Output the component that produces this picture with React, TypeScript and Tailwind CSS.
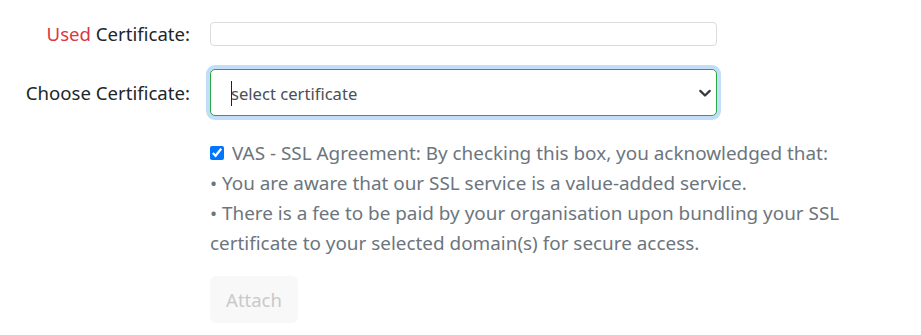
import React from "react";

export default function App() {
  return (
    <div className="w-[921px] h-[335px] bg-white font-['Noto_Sans','Open_Sans',sans-serif] text-[18.6px] text-[#212529]">
      <div className="flex flex-col pt-[22px]">
        <div className="flex items-center h-[24px]">
          <div className="w-[190px] text-right whitespace-nowrap">
            <span className="text-[#dc3545]">Used</span> Certificate:
          </div>
          <div className="ml-[20px] w-[507px] h-[24px] border border-[#dcdcdc] rounded-[4px] bg-white" />
        </div>
        <div className="flex items-center mt-[23px] h-[47px]">
          <div className="w-[190px] text-right whitespace-nowrap">Choose Certificate:</div>
          <div className="ml-[20px] relative w-[507px] h-[47px] rounded-[5px] border border-[#28a745] shadow-[0_0_0_4px_#c2ddf8] bg-white flex items-center">
            <select
              className="appearance-none w-full h-full bg-transparent pl-[20px] pr-10 pt-[3px] text-[16.6px] text-[#495057] outline-none"
              defaultValue=""
            >
              <option value="">select certificate</option>
            </select>
            <span className="absolute left-[20px] top-[11px] w-px h-[25px] bg-[#222]" />
            <svg
              className="absolute right-[4px] top-[17px] pointer-events-none"
              width="14"
              height="12"
              viewBox="0 0 16 14"
            >
              <path d="M2.5 4.5l5.5 5.5 5.5-5.5" fill="none" stroke="#343a40" strokeWidth="2.6" strokeLinecap="round" strokeLinejoin="round" />
            </svg>
          </div>
        </div>
        <div className="ml-[210px] mt-[22px] w-[650px] text-[#6c757d] leading-[30px] text-[18.9px]">
          <div className="flex items-center">
            <input type="checkbox" defaultChecked className="w-[14px] h-[14px] m-0 mr-[8px] accent-[#0075ff]" />
            <span className="whitespace-nowrap">VAS - SSL Agreement: By checking this box, you acknowledged that:</span>
          </div>
          <div>• You are aware that our SSL service is a value-added service.</div>
          <div>• There is a fee to be paid by your organisation upon bundling your SSL certificate to your selected domain(s) for secure access.</div>
        </div>
        <div className="ml-[210px] mt-[18px]">
          <button className="w-[88px] h-[47px] rounded-[6px] bg-[#f8f8f8] text-[#c9c9c9] text-[18.5px]">Attach</button>
        </div>
      </div>
    </div>
  );
}
